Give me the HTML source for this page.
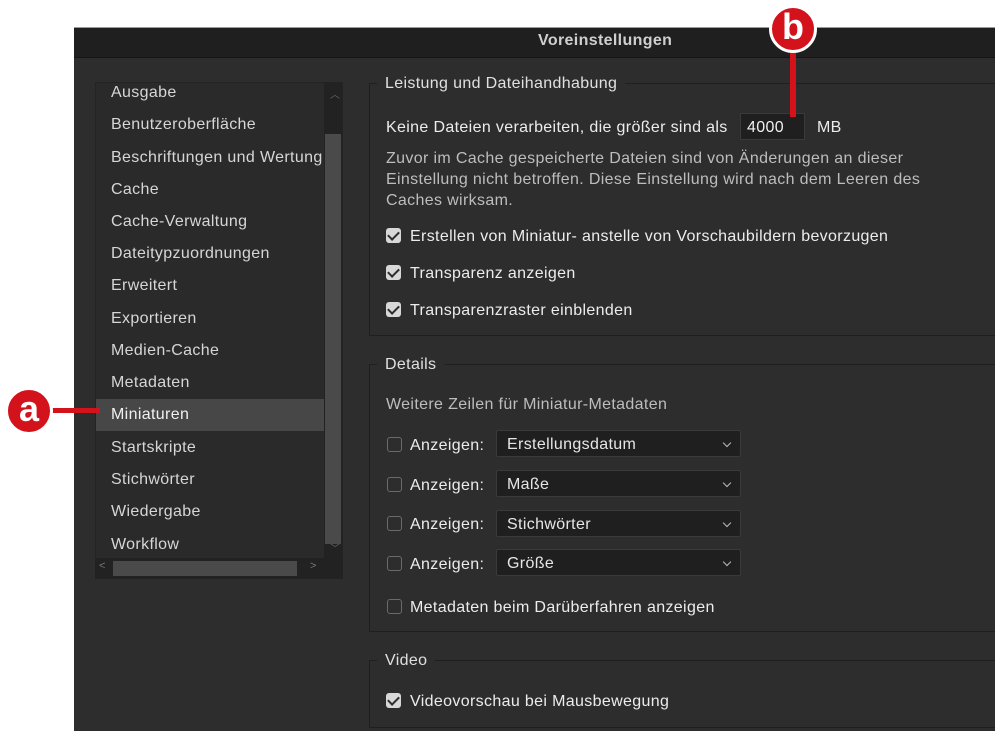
<!DOCTYPE html>
<html><head><meta charset="utf-8"><style>
*{margin:0;padding:0;box-sizing:border-box}
body{width:1000px;height:737px;background:#fff;position:relative;overflow:hidden;font-family:"Liberation Sans",sans-serif;color:#d6d6d6;font-size:16px;letter-spacing:0.35px}
.win{position:absolute;left:74px;top:27px;width:921px;height:704px;background:#2d2d2d;border-top:1px solid #9a9a9a}
.title{position:absolute;left:0;top:0;width:100%;height:30px;background:#1f1f1f;border-bottom:1px solid #151515;line-height:26px;font-weight:bold;color:#cfcfcf;font-size:16px;padding-left:464px}
.t{position:absolute;white-space:nowrap}
.list{position:absolute;left:95px;top:82px;width:248px;height:497px;background:#2a2a2a;border:1px solid #232323}
.sb{position:absolute;left:324px;top:82px;width:18px;height:476px;background:#222}
.thumb{position:absolute;left:325px;top:134px;width:16px;height:410px;background:#4a4a4a}
.hs{position:absolute;left:95px;top:558px;width:248px;height:20px;background:#222}
.hthumb{position:absolute;left:113px;top:561px;width:184px;height:15px;background:#4a4a4a}
.sel{position:absolute;left:96px;top:399px;width:228px;height:32px;background:#474747}
.grp{position:absolute;border:1px solid #1f1f1f;border-right:none}
.leg{position:absolute;background:#2d2d2d;padding:0 8px;color:#e0e0e0}
.cb{position:absolute;width:15px;height:15px;border-radius:3px}
.on{background:#d8d8d8}
.on::after{content:"";position:absolute;left:4px;top:1px;width:5px;height:9px;border:solid #2d2d2d;border-width:0 2.5px 2.5px 0;transform:rotate(45deg)}
.off{border:1px solid #6a6a6a}
.dd{position:absolute;left:496px;width:245px;height:27px;background:#1f1f1f;border:1px solid #3a3a3a;border-radius:2px;padding-left:10px;line-height:27px;color:#e6e6e6}
.dd::after{content:"";position:absolute;right:10px;top:9px;width:5px;height:5px;border:solid #bbb;border-width:0 1.5px 1.5px 0;transform:rotate(45deg)}
.badge{position:absolute;width:48px;height:48px;border-radius:50%;background:#d3121c;border:3px solid #fff;color:#fff;font-weight:bold;font-size:36px;text-align:center;line-height:38px;letter-spacing:0}
</style></head><body>
<div class="win"><div class="title">Voreinstellungen</div></div>

<div class="list"></div>
<div class="sb"></div><div class="thumb"></div>
<div class="hs"></div><div class="hthumb"></div>
<div class="sel"></div>
<div class="t" style="left:330px;top:86px;color:#666;font-size:10px">︿</div>
<div class="t" style="left:330px;top:540px;color:#666;font-size:10px">﹀</div>
<div class="t" style="left:99px;top:560px;color:#777;font-size:11px">&lt;</div>
<div class="t" style="left:310px;top:560px;color:#777;font-size:11px">&gt;</div>
<div class="t" style="left:111px;top:84px;line-height:18px">Ausgabe</div>
<div class="t" style="left:111px;top:116px;line-height:18px">Benutzeroberfläche</div>
<div class="t" style="left:111px;top:149px;line-height:18px;width:213px;overflow:hidden">Beschriftungen und Wertung</div>
<div class="t" style="left:111px;top:181px;line-height:18px">Cache</div>
<div class="t" style="left:111px;top:213px;line-height:18px">Cache-Verwaltung</div>
<div class="t" style="left:111px;top:245px;line-height:18px">Dateitypzuordnungen</div>
<div class="t" style="left:111px;top:277px;line-height:18px">Erweitert</div>
<div class="t" style="left:111px;top:310px;line-height:18px">Exportieren</div>
<div class="t" style="left:111px;top:342px;line-height:18px">Medien-Cache</div>
<div class="t" style="left:111px;top:374px;line-height:18px">Metadaten</div>
<div class="t" style="left:111px;top:406px;line-height:18px;color:#f0f0f0">Miniaturen</div>
<div class="t" style="left:111px;top:439px;line-height:18px">Startskripte</div>
<div class="t" style="left:111px;top:471px;line-height:18px">Stichwörter</div>
<div class="t" style="left:111px;top:503px;line-height:18px">Wiedergabe</div>
<div class="t" style="left:111px;top:536px;line-height:18px">Workflow</div>

<div class="grp" style="left:369px;top:83px;width:626px;height:253px"></div>
<div class="leg t" style="left:377px;top:75px;line-height:18px">Leistung und Dateihandhabung</div>
<div class="t" style="left:386px;top:119px;line-height:18px;color:#ececec">Keine Dateien verarbeiten, die größer sind als</div>
<div class="t" style="left:740px;top:113px;width:65px;height:27px;background:#1f1f1f;border:1px solid #3a3a3a;padding-left:6px;line-height:27px;color:#f0f0f0">4000</div>
<div class="t" style="left:817px;top:119px;line-height:18px;color:#ececec">MB</div>
<div class="t" style="left:386px;top:148px;line-height:21px;color:#bdbdbd">Zuvor im Cache gespeicherte Dateien sind von Änderungen an dieser<br>Einstellung nicht betroffen. Diese Einstellung wird nach dem Leeren des<br>Caches wirksam.</div>
<div class="cb on" style="left:386px;top:228px"></div><div class="t" style="left:410px;top:228px;line-height:18px;color:#ececec">Erstellen von Miniatur- anstelle von Vorschaubildern bevorzugen</div>
<div class="cb on" style="left:386px;top:265px"></div><div class="t" style="left:410px;top:265px;line-height:18px;color:#ececec">Transparenz anzeigen</div>
<div class="cb on" style="left:386px;top:302px"></div><div class="t" style="left:410px;top:302px;line-height:18px;color:#ececec">Transparenzraster einblenden</div>

<div class="grp" style="left:369px;top:364px;width:626px;height:268px"></div>
<div class="leg t" style="left:377px;top:356px;line-height:18px">Details</div>
<div class="t" style="left:386px;top:396px;line-height:18px;color:#bdbdbd">Weitere Zeilen für Miniatur-Metadaten</div>
<div class="cb off" style="left:387px;top:437px"></div><div class="t" style="left:410px;top:437px;line-height:18px;color:#ececec">Anzeigen:</div><div class="dd" style="top:430px">Erstellungsdatum</div>
<div class="cb off" style="left:387px;top:477px"></div><div class="t" style="left:410px;top:477px;line-height:18px;color:#ececec">Anzeigen:</div><div class="dd" style="top:470px">Maße</div>
<div class="cb off" style="left:387px;top:516px"></div><div class="t" style="left:410px;top:516px;line-height:18px;color:#ececec">Anzeigen:</div><div class="dd" style="top:510px">Stichwörter</div>
<div class="cb off" style="left:387px;top:556px"></div><div class="t" style="left:410px;top:556px;line-height:18px;color:#ececec">Anzeigen:</div><div class="dd" style="top:549px">Größe</div>
<div class="cb off" style="left:387px;top:599px"></div><div class="t" style="left:410px;top:599px;line-height:18px;color:#ececec">Metadaten beim Darüberfahren anzeigen</div>

<div class="grp" style="left:369px;top:660px;width:626px;height:68px"></div>
<div class="leg t" style="left:377px;top:652px;line-height:18px">Video</div>
<div class="cb on" style="left:386px;top:693px"></div><div class="t" style="left:410px;top:693px;line-height:18px;color:#ececec">Videovorschau bei Mausbewegung</div>

<div style="position:absolute;left:48px;top:408px;width:52px;height:5px;background:#d3121c"></div>
<div class="badge" style="left:5px;top:387px">a</div>
<div style="position:absolute;left:790px;top:40px;width:6px;height:77px;background:#d3121c"></div>
<div class="badge" style="left:769px;top:5px">b</div>
</body></html>
